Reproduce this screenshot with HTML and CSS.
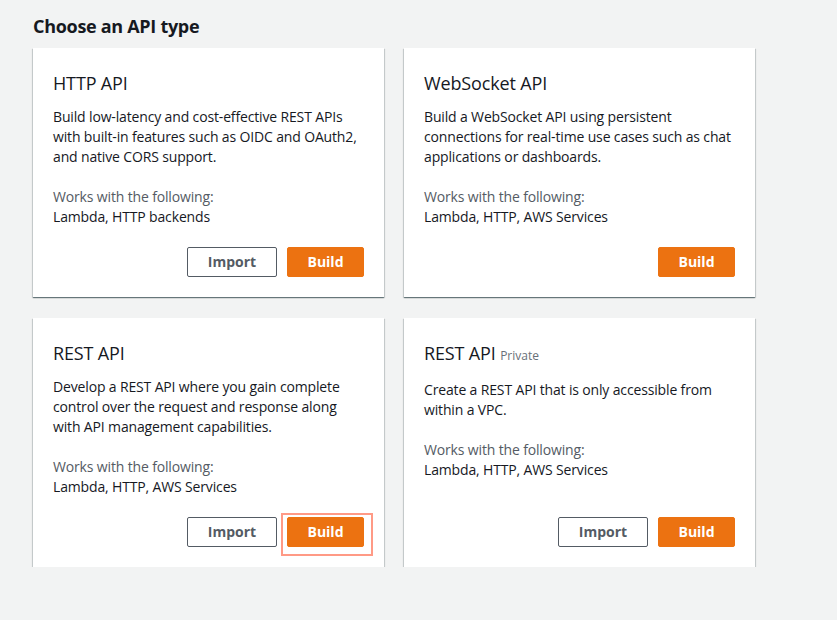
FILE: index.html
```html
<!DOCTYPE html>
<html>
<head>
<meta charset="utf-8">
<link rel="stylesheet" href="styles.css">
</head>
<body>
<main class="page">
  <h2 class="page-title">Choose an API type</h2>
  <div class="grid">
    <section class="card">
      <h3 class="card-title">HTTP API</h3>
      <p class="desc">Build low-latency and cost-effective REST APIs with built-in features such as OIDC and OAuth2, and native CORS support.</p>
      <p class="works-label">Works with the following:</p>
      <p class="works">Lambda, HTTP backends</p>
      <div class="actions">
        <button class="btn btn-normal">Import</button>
        <button class="btn btn-primary">Build</button>
      </div>
    </section>
    <section class="card">
      <h3 class="card-title">WebSocket API</h3>
      <p class="desc">Build a WebSocket API using persistent connections for real-time use cases such as chat applications or dashboards.</p>
      <p class="works-label">Works with the following:</p>
      <p class="works">Lambda, HTTP, AWS Services</p>
      <div class="actions">
        <button class="btn btn-primary">Build</button>
      </div>
    </section>
    <section class="card">
      <h3 class="card-title">REST API</h3>
      <p class="desc">Develop a REST API where you gain complete control over the request and response along with API management capabilities.</p>
      <p class="works-label">Works with the following:</p>
      <p class="works">Lambda, HTTP, AWS Services</p>
      <div class="actions">
        <button class="btn btn-normal">Import</button>
        <span class="highlight-wrap">
          <button class="btn btn-primary">Build</button>
          <span class="highlight"></span>
        </span>
      </div>
    </section>
    <section class="card">
      <h3 class="card-title">REST API <small class="tag">Private</small></h3>
      <p class="desc">Create a REST API that is only accessible from within a VPC.</p>
      <p class="works-label">Works with the following:</p>
      <p class="works">Lambda, HTTP, AWS Services</p>
      <div class="actions">
        <button class="btn btn-normal">Import</button>
        <button class="btn btn-primary">Build</button>
      </div>
    </section>
  </div>
</main>
</body>
</html>
```
FILE: styles.css
```css
html, body {
  margin: 0;
  padding: 0;
  background: #f2f3f3;
  font-family: "Open Sans", "Noto Sans", sans-serif;
  color: #16191f;
  letter-spacing: -0.15px;
}
.page {
  padding: 14px 0 0 33px;
}
.page-title {
  margin: 0 0 10px 0;
  font-size: 18px;
  line-height: 24px;
  font-weight: 700;
  color: #16191f;
  letter-spacing: -0.3px;
}
.grid {
  display: grid;
  grid-template-columns: 351px 351px;
  column-gap: 20px;
  row-gap: 21px;
}
.card {
  background: #fff;
  display: flex;
  flex-direction: column;
  padding: 20px;
  box-shadow: 0 1px 1px 0 rgba(0,28,36,0.45), 1px 1px 1px 0 rgba(0,28,36,0.12), -1px 1px 1px 0 rgba(0,28,36,0.12);
  min-height: 209px;
}
.card-title {
  margin: 0 0 9px 0;
  font-size: 18px;
  line-height: 30px;
  font-weight: 400;
  color: #16191f;
}
.tag {
  font-size: 12px;
  color: #687078;
  font-weight: 400;
  letter-spacing: 0;
}
.desc {
  margin: 0 0 20px 0;
  font-size: 14px;
  line-height: 20px;
}
.works-label {
  margin: 0;
  font-size: 14px;
  line-height: 20px;
  color: #545b64;
}
.works {
  margin: 0;
  font-size: 14px;
  line-height: 20px;
}
.actions {
  margin-top: auto;
  padding-top: 20px;
  display: flex;
  justify-content: flex-end;
  gap: 10px;
}
.btn {
  font-family: inherit;
  font-size: 14px;
  font-weight: 700;
  letter-spacing: 0;
  height: 30px;
  border-radius: 2px;
  padding: 0 10px;
  cursor: pointer;
  line-height: 28px;
}
.btn-normal {
  width: 90px;
  background: #fff;
  color: #545b64;
  border: 1px solid #545b64;
}
.btn-primary {
  width: 77px;
  background: #ec7211;
  color: #fff;
  border: 1px solid #ec7211;
}
.highlight-wrap {
  position: relative;
  display: inline-flex;
}
.highlight {
  position: absolute;
  left: -6px;
  top: -4px;
  right: -9px;
  bottom: -9px;
  border: 2px solid #ff9a86;
  pointer-events: none;
}
```
